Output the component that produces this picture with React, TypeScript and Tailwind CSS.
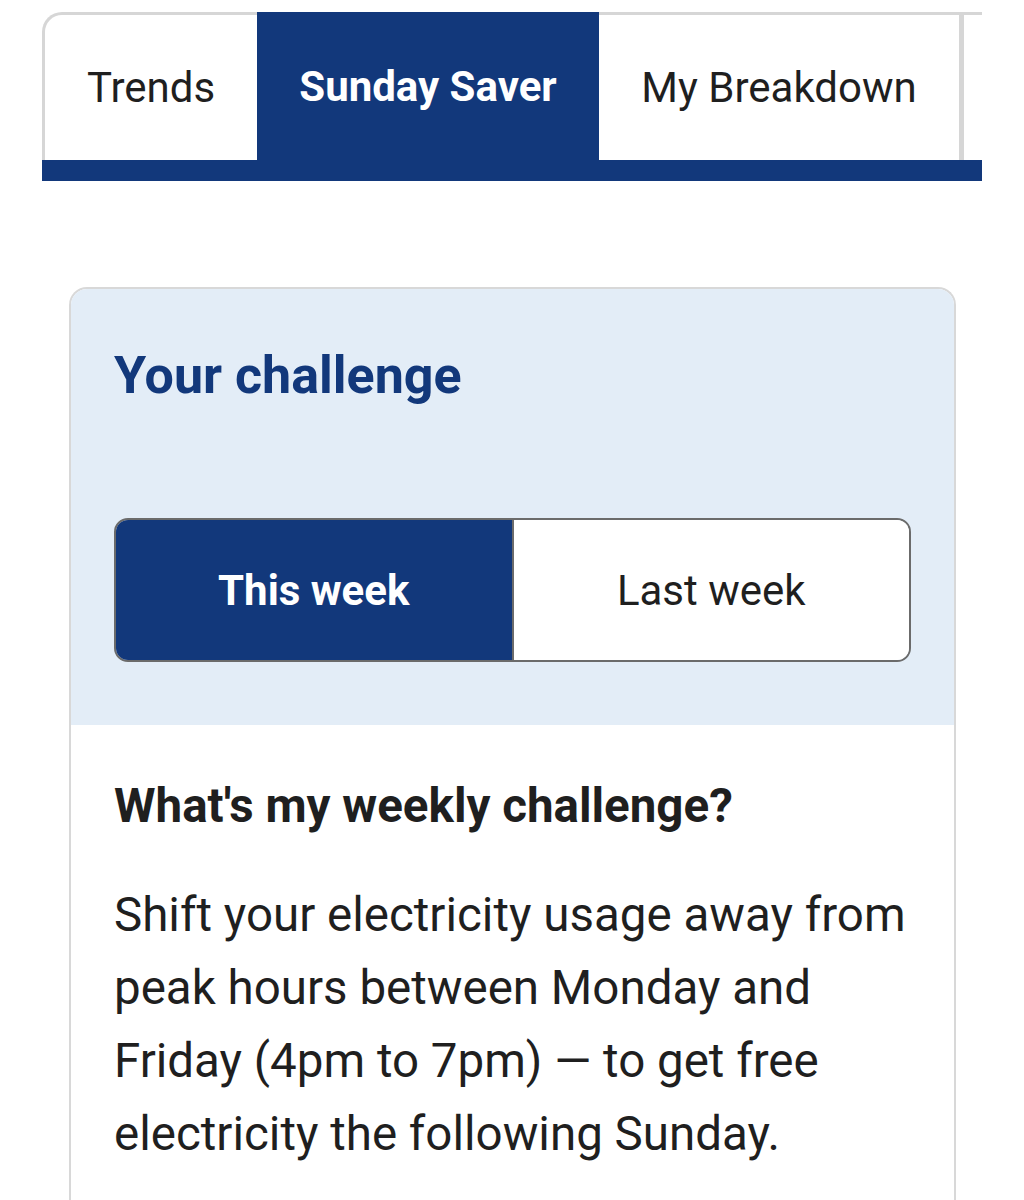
import React from "react";

export default function App() {
  return (
    <div className="w-[1024px] h-[1200px] overflow-hidden bg-white font-['Roboto','Liberation_Sans',sans-serif] text-[#1f1f1f]">
      <div className="pt-3 pl-[42px]">
        <div className="w-[940px] overflow-hidden">
          <div className="flex h-[148px] w-[1200px]">
            <div className="flex w-[215px] shrink-0 items-center justify-center rounded-tl-[20px] border-l-[3px] border-t-[3px] border-[#d6d6d6] bg-white text-[42px]">
              Trends
            </div>
            <div className="flex w-[342px] shrink-0 items-center justify-center bg-[#12387b] text-[42px] font-bold text-white">
              Sunday Saver
            </div>
            <div className="flex w-[363px] shrink-0 items-center justify-center border-r-[3px] border-t-[3px] border-[#d6d6d6] bg-white text-[42px]">
              My Breakdown
            </div>
            <div className="w-[240px] shrink-0 border-l-[2px] border-t-[3px] border-[#d6d6d6] bg-white" />
          </div>
          <div className="h-[21px] bg-[#12387b]" />
        </div>
      </div>

      <div className="ml-[69px] mt-[106px] w-[887px] overflow-hidden rounded-t-[18px] border-x-2 border-t-2 border-[#d8d8d8]">
        <div className="bg-[#e3edf7] px-[43px] pt-[55px] pb-[63px]">
          <h2 className="text-[52px] font-bold leading-[64px] text-[#12387b]">Your challenge</h2>
          <div className="mt-[110px] flex h-[144px] overflow-hidden rounded-[14px] border-2 border-[#6b6b6b]">
            <div className="flex flex-1 items-center justify-center border-r-2 border-[#6b6b6b] bg-[#12387b] text-[42px] font-bold text-white">
              This week
            </div>
            <div className="flex flex-1 items-center justify-center bg-white text-[42px] text-[#1f1f1f]">
              Last week
            </div>
          </div>
        </div>
        <div className="bg-white pl-[43px] pr-[30px] pt-[53px] pb-[40px]">
          <h3 className="text-[47.5px] font-bold leading-[56px] text-[#1f1f1f]">What's my weekly challenge?</h3>
          <p className="mt-[45px] text-[47.5px] leading-[73px] text-[#1f1f1f]">
            Shift your electricity usage away from peak hours between Monday and Friday (4pm to 7pm) — to get free electricity the following Sunday.
          </p>
        </div>
      </div>
    </div>
  );
}
